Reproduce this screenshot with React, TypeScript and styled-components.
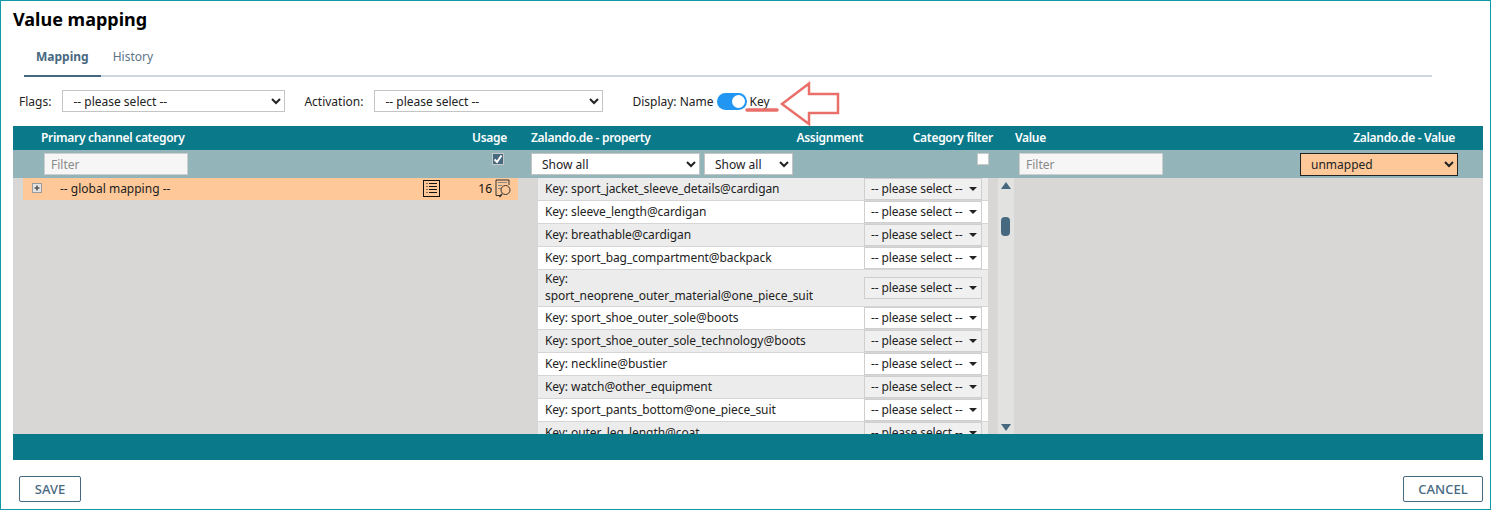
import styled, {createGlobalStyle} from 'styled-components'

const Global = createGlobalStyle`
  html, body {
    margin: 0;
    padding: 0;
    background: #fff;
  }
  body {
    font-family: 'Noto Sans', 'Open Sans', sans-serif;
    font-size: 12px;
    color: #222;
  }
  * {
    box-sizing: border-box;
  }
`

const Page = styled.div`
  position: relative;
  width: 1491px;
  height: 510px;
  border: 1px solid #0f98a5;
  display: flex;
  flex-direction: column;
  padding: 0 7px 0 12px;
  overflow: hidden;
`

const Title = styled.h1`
  margin: 7px 0 0;
  height: 23px;
  font-size: 18px;
  line-height: 22px;
  font-weight: 700;
  color: #000;
`

const Tabs = styled.div`
  display: flex;
  height: 46px;
  margin: 0 51px 0 11px;
  border-bottom: 2px solid #ced6df;
`

const Tab = styled.div<{$active?: boolean}>`
  height: 46px;
  padding: 0 12px;
  line-height: 52px;
  font-size: 12px;
  font-weight: ${(p) => (p.$active ? 700 : 400)};
  color: ${(p) => (p.$active ? '#47697f' : '#5b7487')};
  border-bottom: ${(p) => (p.$active ? '2px solid #47697f' : 'none')};
`

const FlagRow = styled.div`
  display: flex;
  align-items: center;
  height: 22px;
  margin-top: 13px;
  padding-left: 6px;
`

const FlagLabel = styled.label`
  font-size: 12px;
  margin-right: 11px;
`

const NativeSelect = styled.select<{$w: number; $mapped?: boolean}>`
  width: ${(p) => p.$w}px;
  height: ${(p) => (p.$mapped ? 23 : 22)}px;
  padding: 0 6px;
  font-family: inherit;
  font-size: 12px;
  color: #222;
  background: ${(p) => (p.$mapped ? '#fec898' : '#fff')};
  border: 1px solid ${(p) => (p.$mapped ? '#222' : '#c4c4c4')};
  border-radius: 0;
`

const FlagSelect = styled(NativeSelect)`
  margin-right: 19px;
`

const Display = styled.div`
  display: flex;
  align-items: center;
  margin-left: 10px;
  font-size: 12px;
`

const Toggle = styled.span`
  position: relative;
  width: 30px;
  height: 17px;
  margin: 0 3px;
  border-radius: 9px;
  background: #2196f3;
  &::after {
    content: '';
    position: absolute;
    top: 2px;
    right: 2px;
    width: 13px;
    height: 13px;
    border-radius: 50%;
    background: #fff;
  }
`

const Annotation = styled.svg`
  position: absolute;
  left: 740px;
  top: 78px;
`

const Grid = styled.div`
  display: flex;
  flex-direction: column;
  margin-top: 14px;
  height: 334px;
`

const HeadRow = styled.div`
  display: flex;
  height: 24px;
  flex: none;
  background: #0a798a;
  color: #fff;
  font-weight: 600;
  letter-spacing: -0.3px;
  line-height: 24px;
`

const LeftHead = styled.div`
  width: 506px;
  display: flex;
  justify-content: space-between;
  padding: 0 12px 0 28px;
`

const MidHead = styled.div`
  width: 474px;
  display: flex;
  padding-left: 12px;
`

const AssignHead = styled.span`
  margin-left: auto;
`

const CategoryHead = styled.span`
  width: 130px;
  text-align: right;
`

const RightHead = styled.div`
  flex: 1;
  display: flex;
  justify-content: space-between;
  padding: 0 28px 0 22px;
`

const FilterRow = styled.div`
  display: flex;
  height: 28px;
  flex: none;
  background: #93b5ba;
`

const LeftFilter = styled.div`
  width: 506px;
  display: flex;
  justify-content: space-between;
  padding: 3px 15px 0 31px;
`

const MidFilter = styled.div`
  width: 474px;
  display: flex;
  gap: 4px;
  padding: 3px 0 0 12px;
`

const RightFilter = styled.div`
  flex: 1;
  display: flex;
  justify-content: space-between;
  padding: 3px 25px 0 26px;
`

const FilterInput = styled.input`
  width: 144px;
  height: 22px;
  padding: 0 6px;
  font-family: inherit;
  font-size: 12px;
  background: #f6f6f6;
  border: 1px solid #cfcfcf;
  &::placeholder {
    color: #8a8a8a;
  }
`

const Check = styled.span<{$on?: boolean}>`
  display: flex;
  align-items: center;
  justify-content: center;
  width: 12px;
  height: 12px;
  background: ${(p) => (p.$on ? '#47697f' : '#fff')};
  border: 1px solid #c8c8c8;
`

const CheckSlot = styled.span`
  margin-left: auto;
  margin-right: 4px;
`

const Body = styled.div`
  flex: 1;
  min-height: 0;
  display: flex;
  background: #d8d7d5;
  overflow: hidden;
`

const TreePane = styled.div`
  width: 525px;
  flex: none;
  padding-left: 10px;
`

const TreeRow = styled.div`
  width: 495px;
  height: 22px;
  display: flex;
  align-items: center;
  background: #fec898;
  color: #222;
  padding: 0 6px 2px 9px;
`

const TreeName = styled.span`
  margin-left: 18px;
  flex: 1;
`

const Count = styled.span`
  width: 34px;
  margin-left: 18px;
  text-align: right;
  margin-right: 3px;
  color: #111;
`

const PropPane = styled.div`
  width: 450px;
  flex: none;
`

const PropRow = styled.div<{$odd: boolean}>`
  display: flex;
  align-items: center;
  min-height: 23px;
  background: ${(p) => (p.$odd ? '#ececec' : '#fff')};
  border-bottom: 1px solid #d6d6d6;
  padding: 0 5px 0 7px;
`

const PropName = styled.div`
  width: 319px;
  line-height: 17px;
  letter-spacing: -0.07px;
  padding: 0 30px 2px 0;
  overflow-wrap: anywhere;
`

const Pick = styled.div<{$odd: boolean}>`
  width: 118px;
  height: 22px;
  display: flex;
  align-items: center;
  justify-content: space-between;
  padding: 0 4px 2px 6px;
  letter-spacing: -0.12px;
  background: ${(p) => (p.$odd ? '#f0f0f0' : '#fff')};
  border: 1px solid #cfcfcf;
  white-space: nowrap;
  &::after {
    content: '';
    margin-top: 2px;
    border-left: 4px solid transparent;
    border-right: 4px solid transparent;
    border-top: 4px solid #222;
  }
`

const Track = styled.div`
  width: 16px;
  margin-left: 10px;
  flex: none;
  position: relative;
  background: #e2e2e0;
`

const ScrollUp = styled.span`
  position: absolute;
  top: 4px;
  left: 3px;
  border-left: 5px solid transparent;
  border-right: 5px solid transparent;
  border-bottom: 7px solid #47697f;
`

const ScrollThumb = styled.span`
  position: absolute;
  top: 39px;
  left: 3px;
  width: 9px;
  height: 19px;
  border-radius: 4px;
  background: #47697f;
`

const ScrollDown = styled.span`
  position: absolute;
  bottom: 3px;
  left: 3px;
  border-left: 5px solid transparent;
  border-right: 5px solid transparent;
  border-top: 7px solid #47697f;
`

const FootBar = styled.div`
  height: 26px;
  flex: none;
  background: #0a798a;
`

const Actions = styled.div`
  display: flex;
  justify-content: space-between;
  margin-top: 16px;
  padding-left: 6px;
`

const Button = styled.button<{$w: number}>`
  width: ${(p) => p.$w}px;
  height: 26px;
  background: #fff;
  border: 1px solid #47697f;
  border-radius: 2px;
  color: #47697f;
  font-family: inherit;
  font-size: 13px;
  font-weight: 500;
  padding: 0;
`

function PlusBox() {
  return (
    <svg width="10" height="10" viewBox="0 0 10 10">
      <rect x="0.5" y="0.5" width="9" height="9" fill="#e4e4e4" stroke="#9a9a9a" />
      <path d="M2.5 5h5M5 2.5v5" stroke="#555" strokeWidth="1.6" />
    </svg>
  )
}

function ListIcon() {
  return (
    <svg width="17" height="17" viewBox="0 0 17 17" fill="none" stroke="#111">
      <rect x="0.5" y="0.5" width="16" height="16" />
      <path d="M3.5 3.5h1M6 3.5h8M3.5 6.5h1M6 6.5h8M3.5 9.5h1M6 9.5h8M3.5 12.5h1M6 12.5h8" />
    </svg>
  )
}

function DocSearchIcon() {
  return (
    <svg width="17" height="19" viewBox="0 0 17 19" fill="none" stroke="#333">
      <path d="M5.5 16.5H1V1h13v5" />
      <path d="M3 3.5h9M3 6.5h4M3 9.5h3" stroke="#888" />
      <circle cx="10.5" cy="11" r="4.5" fill="#fec898" />
      <path d="M7 15l-2.5 3" strokeWidth="1.6" />
    </svg>
  )
}

function Tick() {
  return (
    <svg width="10" height="10" viewBox="0 0 10 10" fill="none">
      <path d="M1.5 5.5 4 8 8.5 1.5" stroke="#fff" strokeWidth="2" />
    </svg>
  )
}

const properties = [
  'sport_jacket_sleeve_details@cardigan',
  'sleeve_length@cardigan',
  'breathable@cardigan',
  'sport_bag_compartment@backpack',
  'sport_neoprene_outer_material@one_piece_suit',
  'sport_shoe_outer_sole@boots',
  'sport_shoe_outer_sole_technology@boots',
  'neckline@bustier',
  'watch@other_equipment',
  'sport_pants_bottom@one_piece_suit',
  'outer_leg_length@coat',
]

export default function App() {
  return (
    <Page>
      <Global />
      <Title>Value mapping</Title>
      <Tabs>
        <Tab $active>Mapping</Tab>
        <Tab>History</Tab>
      </Tabs>
      <FlagRow>
        <FlagLabel>Flags:</FlagLabel>
        <FlagSelect $w={223}>
          <option>-- please select --</option>
        </FlagSelect>
        <FlagLabel>Activation:</FlagLabel>
        <FlagSelect $w={229}>
          <option>-- please select --</option>
        </FlagSelect>
        <Display>
          Display: Name
          <Toggle />
          Key
        </Display>
      </FlagRow>
      <Annotation width="100" height="48" viewBox="0 0 100 48" fill="none">
        <path d="M41 25 68 4.5V15H97V34H68V45Z" fill="#fff" stroke="#e9706a" strokeWidth="2.5" />
        <path d="M6 31H36" stroke="#e9706a" strokeWidth="3.5" strokeLinecap="round" />
      </Annotation>
      <Grid>
        <HeadRow>
          <LeftHead>
            <span>Primary channel category</span>
            <span>Usage</span>
          </LeftHead>
          <MidHead>
            <span>Zalando.de - property</span>
            <AssignHead>Assignment</AssignHead>
            <CategoryHead>Category filter</CategoryHead>
          </MidHead>
          <RightHead>
            <span>Value</span>
            <span>Zalando.de - Value</span>
          </RightHead>
        </HeadRow>
        <FilterRow>
          <LeftFilter>
            <FilterInput placeholder="Filter" />
            <Check $on>
              <Tick />
            </Check>
          </LeftFilter>
          <MidFilter>
            <NativeSelect $w={169}>
              <option>Show all</option>
            </NativeSelect>
            <NativeSelect $w={89}>
              <option>Show all</option>
            </NativeSelect>
            <CheckSlot>
              <Check />
            </CheckSlot>
          </MidFilter>
          <RightFilter>
            <FilterInput placeholder="Filter" />
            <NativeSelect $w={158} $mapped>
              <option>unmapped</option>
            </NativeSelect>
          </RightFilter>
        </FilterRow>
        <Body>
          <TreePane>
            <TreeRow>
              <PlusBox />
              <TreeName>-- global mapping --</TreeName>
              <ListIcon />
              <Count>16</Count>
              <DocSearchIcon />
            </TreeRow>
          </TreePane>
          <PropPane>
            {properties.map((name, i) => (
              <PropRow key={name} $odd={i % 2 === 0}>
                <PropName>Key: {name}</PropName>
                <Pick $odd={i % 2 === 0}>-- please select --</Pick>
              </PropRow>
            ))}
          </PropPane>
          <Track>
            <ScrollUp />
            <ScrollThumb />
            <ScrollDown />
          </Track>
        </Body>
        <FootBar />
      </Grid>
      <Actions>
        <Button $w={62}>SAVE</Button>
        <Button $w={80}>CANCEL</Button>
      </Actions>
    </Page>
  )
}
